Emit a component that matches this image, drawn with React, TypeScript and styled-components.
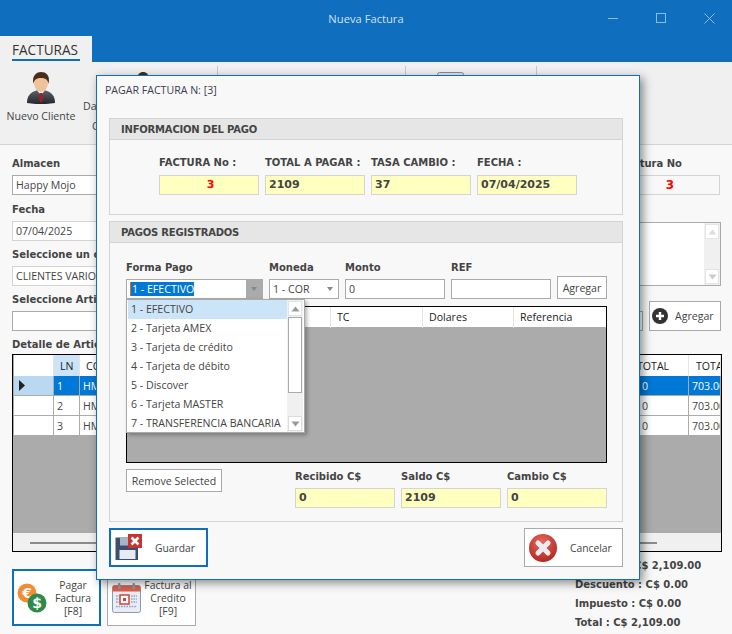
import React from 'react';
import styled, { createGlobalStyle } from 'styled-components';

const UI_FONT = `'Open Sans', 'Noto Sans', sans-serif`;
const BOLD_FONT = `'DejaVu Sans', Verdana, sans-serif`;

const GlobalStyle = createGlobalStyle`
  html, body { margin: 0; padding: 0; background: #f8f8f8; }
  body { width: 732px; height: 634px; overflow: hidden; font-family: ${UI_FONT}; font-size: 10.6px; color: #444; }
  * { box-sizing: border-box; }
`;

const Page = styled.div`
  position: relative;
  width: 732px;
  height: 634px;
  overflow: hidden;
`;

/* window chrome */
const TitleBar = styled.div`
  height: 36px;
  background: #106ebe;
  display: grid;
  grid-template-columns: 1fr auto 1fr;
  align-items: center;
`;
const WindowTitle = styled.div`
  grid-column: 2;
  color: #cfe2f3;
  font-size: 11.2px;
`;
const WindowControls = styled.div`
  grid-column: 3;
  justify-self: end;
  display: flex;
  color: #8fbbe0;
  margin-right: -1px;
`;
const WindowControl = styled.div`
  width: 48px;
  height: 36px;
  display: flex;
  align-items: center;
  justify-content: center;
`;
const TabStrip = styled.div`
  height: 26px;
  background: #106ebe;
`;
const Tab = styled.div`
  width: 92px;
  height: 26px;
  background: #f0f0f0;
  padding: 0 12px;
`;
const TabLabel = styled.div`
  height: 25px;
  line-height: 27px;
  font-size: 13.6px;
  color: #333;
  border-bottom: 2px solid #106ebe;
  white-space: nowrap;
`;

/* ribbon */
const Ribbon = styled.div`
  height: 83px;
  background: #f0f0f0;
  border-bottom: 1px solid #d4d4d4;
  display: flex;
  padding-top: 4px;
`;
const RibbonGroup = styled.div<{ $width: number; $last?: boolean }>`
  width: ${p => p.$width}px;
  height: 70px;
  display: flex;
  border-right: ${p => (p.$last ? 'none' : '1px solid #c8c8c8')};
`;
const RibbonButton = styled.div<{ $width: number }>`
  width: ${p => p.$width}px;
  flex: none;
  display: flex;
  flex-direction: column;
  align-items: center;
  padding-top: 6px;
  text-align: center;
  line-height: 20px;
  white-space: nowrap;
  svg { margin-bottom: 2px; }
`;

/* form behind the dialog */
const Content = styled.div`
  padding: 11px 11px 0 12px;
`;
const TopForm = styled.div`
  display: flex;
  justify-content: space-between;
`;
const FormColumn = styled.div<{ $width: number }>`
  width: ${p => p.$width}px;
  display: flex;
  flex-direction: column;
`;
const Label = styled.div`
  height: 14px;
  padding-top: 1px;
  font-family: ${BOLD_FONT};
  font-weight: 700;
  font-size: 10px;
  line-height: 14px;
  color: #444;
  white-space: nowrap;
`;
const RightLabel = styled(Label)`
  text-align: right;
  padding-right: 39px;
  margin-bottom: 5px;
`;
const DetailLabel = styled(Label)`
  margin-top: 6px;
`;
const Input = styled.div<{ $tone?: 'white' | 'gray' }>`
  width: 100%;
  height: 20px;
  line-height: 18px;
  background: #fff;
  border: 1px solid ${p => (p.$tone === 'gray' ? '#d4d4d4' : '#aaa')};
  padding: 0 3px;
  color: #444;
  white-space: nowrap;
  overflow: hidden;
  flex: none;
`;
const LeftField = styled.div<{ $gap?: number }>`
  margin-bottom: ${p => p.$gap ?? 6}px;
  display: flex;
  flex-direction: column;
  gap: 5px;
`;
const RedValue = styled.div`
  width: 100px;
  align-self: flex-end;
  margin-right: 1px;
  border: 1px solid #d4d4d4;
  background: #f8f8f8;
  height: 20px;
  line-height: 18px;
  text-align: center;
  font-family: ${BOLD_FONT};
  font-weight: 700;
  font-size: 12px;
  color: #f00;
`;
const NotesBox = styled.div`
  margin-top: 27px;
  height: 64px;
  background: #fff;
  border: 1px solid #aaa;
  display: flex;
  justify-content: flex-end;
`;
const ScrollTrack = styled.div<{ $width: number }>`
  width: ${p => p.$width}px;
  height: 100%;
  background: #f0f0f0;
  display: flex;
  flex-direction: column;
  justify-content: space-between;
  align-items: center;
  padding: 1px;
`;
const ScrollButton = styled.div`
  width: 100%;
  height: 15px;
  flex: none;
  background: #fff;
  border: 1px solid #e4e4e4;
  display: flex;
  align-items: center;
  justify-content: center;
`;
const ArticleRow = styled.div`
  display: flex;
  gap: 6px;
  align-items: flex-end;
`;
const ArticleField = styled(LeftField)`
  flex: 1;
  min-width: 0;
  margin-bottom: 0;
`;
const AddButton = styled.div`
  width: 72px;
  height: 30px;
  flex: none;
  border: 1px solid #aaa;
  background: #fff;
  display: flex;
  align-items: center;
  gap: 7px;
  padding-left: 2px;
`;

/* article grid */
const DetailGrid = styled.div`
  margin-top: 3px;
  width: 710px;
  height: 198px;
  border: 1px solid #000;
  background: #ababab;
  display: flex;
  flex-direction: column;
  overflow: hidden;
`;
const ArticleTable = styled.div`
  display: grid;
  grid-template-columns: 40px 26px 556px 53px 32px;
  grid-auto-rows: 20px;
  grid-template-rows: 21px;
  padding-left: 1px;
  flex: 1;
`;
const HeadCell = styled.div<{ $accent?: boolean; $pad?: number }>`
  background: ${p => (p.$accent ? '#cce4f7' : '#fff')};
  border-right: 1px solid #e4e4e4;
  color: #222;
  line-height: 22px;
  padding-left: ${p => p.$pad ?? 6}px;
  white-space: nowrap;
  overflow: hidden;
`;
const RowHead = styled.div<{ $current?: boolean }>`
  background: ${p => (p.$current ? '#b9d8f2' : '#fff')};
  border: 1px solid #ababab;
  border-width: 0 1px 1px 0;
  display: flex;
  align-items: center;
  padding-left: 5px;
`;
const Cell = styled.div<{ $selected?: boolean; $pad?: number }>`
  background: ${p => (p.$selected ? '#0078d7' : '#fff')};
  color: ${p => (p.$selected ? '#fff' : '#444')};
  border: 1px solid #ababab;
  border-width: 0 1px 1px 0;
  line-height: 20px;
  padding-left: ${p => p.$pad ?? 3}px;
  white-space: nowrap;
  overflow: hidden;
`;
const GridScroll = styled.div`
  height: 18px;
  background: #f0f0f0;
  padding: 9px 17px 0;
`;
const GridThumb = styled.div`
  height: 2px;
  width: 627px;
  background: #8c8c8c;
`;

/* footer */
const Footer = styled.div`
  display: flex;
  justify-content: space-between;
  margin-top: 4px;
`;
const FooterButtons = styled.div`
  display: flex;
  gap: 6px;
  margin-top: 13px;
`;
const ActionButton = styled.div<{ $primary?: boolean }>`
  width: 89px;
  height: 57px;
  background: #fff;
  border: ${p => (p.$primary ? '2px solid #106ebe' : '1px solid #aaa')};
  display: flex;
  align-items: center;
  padding-left: ${p => (p.$primary ? 3 : 4)}px;
  line-height: 13px;
`;
const ActionText = styled.div`
  flex: 1;
  padding-top: 2px;
  text-align: center;
  font-size: 10.4px;
  white-space: nowrap;
`;
const Totals = styled.div`
  width: 146px;
  display: flex;
  flex-direction: column;
  font-family: ${BOLD_FONT};
  font-weight: 700;
  font-size: 10px;
  line-height: 19px;
  color: #444;
  white-space: nowrap;
`;

/* dialog */
const Dialog = styled.div`
  position: absolute;
  left: 96px;
  top: 75px;
  width: 544px;
  height: 505px;
  background: #f8f8f8;
  border: 1px solid #106ebe;
  box-shadow: 3px 3px 9px rgba(0, 0, 0, 0.45);
  padding: 0 16px 0 12px;
`;
const DialogTitle = styled.div`
  height: 42px;
  padding-top: 6px;
  margin-left: -4px;
  line-height: 16px;
  color: #3c3c50;
`;
const Panel = styled.div<{ $height: number }>`
  height: ${p => p.$height}px;
  border: 1px solid #d4d4d4;
  margin-bottom: 6px;
`;
const PanelHeader = styled.div`
  height: 21px;
  background: #e6e6e6;
  border-bottom: 1px solid #d4d4d4;
  padding-left: 11px;
  line-height: 22px;
  font-family: ${BOLD_FONT};
  font-weight: 700;
  font-size: 10px;
  letter-spacing: -0.2px;
  color: #444;
  white-space: nowrap;
`;
const InfoRow = styled.div`
  display: flex;
  gap: 6px;
  padding: 15px 0 0 49px;
`;
const InfoField = styled.div`
  width: 100px;
  display: flex;
  flex-direction: column;
  gap: 6px;
`;
const YellowValue = styled.div<{ $center?: boolean; $red?: boolean }>`
  height: 20px;
  background: #ffffc0;
  border: 1px solid #d4d4d4;
  line-height: 18px;
  padding-left: 3px;
  text-align: ${p => (p.$center ? 'center' : 'left')};
  font-family: ${BOLD_FONT};
  font-weight: 700;
  font-size: 11px;
  color: ${p => (p.$red ? '#f00' : '#444')};
`;
const PaymentBody = styled.div`
  position: relative;
  padding: 17px 15px 0 16px;
`;
const EntryRow = styled.div`
  display: flex;
  gap: 6px;
  align-items: flex-end;
`;
const EntryField = styled.div<{ $width: number }>`
  width: ${p => p.$width}px;
  display: flex;
  flex-direction: column;
  gap: 5px;
`;
const ComboBox = styled.div`
  height: 20px;
  background: #fff;
  border: 1px solid #aaa;
  display: flex;
  align-items: stretch;
  justify-content: space-between;
  padding-left: 3px;
  line-height: 18px;
  color: #444;
  white-space: nowrap;
`;
const ComboSelection = styled.span`
  align-self: center;
  height: 14px;
  line-height: 14px;
  background: #0078d7;
  color: #fff;
  padding-left: 1px;
  border-left: 1px solid #e8650a;
`;
const ComboArrow = styled.div<{ $open?: boolean }>`
  width: 16px;
  background: ${p => (p.$open ? '#ababab' : '#fff')};
  display: flex;
  align-items: center;
  justify-content: center;
  &::after {
    content: '';
    border: 3.5px solid transparent;
    border-top: 4px solid #888;
    border-bottom: 0;
  }
`;
const SmallButton = styled.div<{ $width: number }>`
  width: ${p => p.$width}px;
  height: 23px;
  flex: none;
  background: #fff;
  border: 1px solid #aaa;
  display: flex;
  align-items: center;
  justify-content: center;
  color: #444;
  white-space: nowrap;
`;
const PaymentsTable = styled.div`
  margin-top: 7px;
  width: 481px;
  height: 157px;
  background: #ababab;
  border: 1px solid #000;
`;
const PaymentsHeader = styled.div`
  height: 20px;
  background: #fff;
  display: grid;
  grid-template-columns: 203px 92px 91px 1fr;
  line-height: 21px;
  color: #222;
`;
const PaymentsHead = styled.div`
  padding-left: 6px;
  border-left: 1px solid #e4e4e4;
  &:first-child { border-left: none; }
`;
const DropList = styled.div`
  position: absolute;
  left: 16px;
  top: 56px;
  width: 179px;
  height: 134px;
  background: #fff;
  border: 1px solid #aaa;
  box-shadow: 2px 2px 4px rgba(0, 0, 0, 0.3);
  display: flex;
  padding: 0 1px;
  z-index: 2;
`;
const DropItems = styled.div`
  flex: 1;
  display: flex;
  flex-direction: column;
  overflow: hidden;
`;
const DropItem = styled.div<{ $active?: boolean }>`
  height: 19px;
  flex: none;
  line-height: 19px;
  padding-left: 3px;
  background: ${p => (p.$active ? '#cce4f7' : 'transparent')};
  color: #444;
  white-space: nowrap;
`;
const DropScroll = styled.div`
  width: 16px;
  background: #f0f0f0;
  display: flex;
  flex-direction: column;
  padding: 1px;
`;
const DropThumb = styled.div`
  height: 76px;
  margin-top: 1px;
  background: #fff;
  border: 1px solid #aaa;
`;
const DropDown = styled(ScrollButton)`
  margin-top: auto;
  border-color: #ddd;
`;
const SummaryRow = styled.div`
  display: flex;
  margin-top: 6px;
`;
const SummaryFields = styled.div`
  margin-left: 73px;
  display: flex;
  gap: 6px;
`;
const SummaryField = styled.div`
  width: 100px;
  display: flex;
  flex-direction: column;
  gap: 5px;
`;
const DialogActions = styled.div`
  display: flex;
  justify-content: space-between;
`;
const DialogButton = styled.div<{ $primary?: boolean }>`
  width: 99px;
  height: 39px;
  background: #fff;
  border: ${p => (p.$primary ? '2px solid #106ebe' : '1px solid #aaa')};
  display: flex;
  align-items: center;
  gap: ${p => (p.$primary ? 12 : 13)}px;
  padding-left: 4px;
  color: #444;
  font-size: 10.3px;
`;

const Triangle = ({ dir, color = '#aaa' }: { dir: 'up' | 'down' | 'right'; color?: string }) => {
  if (dir === 'right') {
    return (
      <svg width="6" height="11" viewBox="0 0 6 11">
        <path d="M0 0 L6 5.5 L0 11 Z" fill={color} />
      </svg>
    );
  }
  return (
    <svg width="9" height="6" viewBox="0 0 9 6">
      <path d={dir === 'up' ? 'M0.5 5.5 L4.5 0.5 L8.5 5.5 Z' : 'M0.5 0.5 L4.5 5.5 L8.5 0.5 Z'} fill={color} />
    </svg>
  );
};

const PersonIcon = () => (
  <svg width="28" height="32" viewBox="0 0 28 32">
    <defs>
      <linearGradient id="suit" x1="0" y1="0" x2="0" y2="1">
        <stop offset="0" stopColor="#5a6068" />
        <stop offset="1" stopColor="#23272c" />
      </linearGradient>
    </defs>
    <path d="M0 31 C0 24 3 20.5 9.5 18.5 L18.5 18.5 C25 20.5 28 24 28 31 C20 32.5 8 32.5 0 31 Z" fill="url(#suit)" />
    <path d="M10 18.5 L14 23 L18 18.5 Z" fill="#f2f2f2" />
    <path d="M12.7 21 L15.3 21 L16 28 L14 30.5 L12 28 Z" fill="#a51d24" />
    <ellipse cx="14" cy="11" rx="7" ry="9" fill="#eec39c" />
    <path d="M6.5 12 C4.5 3 10 0 14 0 C19 0 23.5 3 21.5 12 C21 7.5 18 6 14 6 C10 6 7 7.5 6.5 12 Z" fill="#4a2c1a" />
  </svg>
);

const BoardIcon = () => (
  <svg width="27" height="32" viewBox="0 0 27 32">
    <rect x="0.5" y="0.5" width="26" height="28" rx="2" fill="#dfe6f0" stroke="#7f8ea6" />
  </svg>
);

const PlusIcon = () => (
  <svg width="16" height="16" viewBox="0 0 16 16">
    <circle cx="8" cy="8" r="8" fill="#333" />
    <path d="M8 4 V12 M4 8 H12" stroke="#fff" strokeWidth="2.4" />
  </svg>
);

const CoinsIcon = () => (
  <svg width="30" height="30" viewBox="0 0 30 30" fontFamily="'DejaVu Sans', sans-serif" fontWeight="700" textAnchor="middle">
    <circle cx="10" cy="10" r="9.5" fill="#ef8c34" />
    <text x="10" y="15" fontSize="14" fill="#fff">€</text>
    <circle cx="20" cy="20" r="9.5" fill="#2f8a4a" />
    <text x="20" y="25" fontSize="14" fill="#fff">$</text>
  </svg>
);

const CalendarIcon = () => (
  <svg width="29" height="30" viewBox="0 0 29 30">
    <rect x="0.5" y="2.5" width="28" height="27" rx="2" fill="#e8edf5" stroke="#8d99ae" />
    <path d="M0.5 4.5 a2 2 0 0 1 2 -2 h24 a2 2 0 0 1 2 2 v4 h-28 Z" fill="#d9604c" />
    <rect x="6" y="0" width="2.5" height="6" rx="1" fill="#8d99ae" />
    <rect x="20.5" y="0" width="2.5" height="6" rx="1" fill="#8d99ae" />
    <rect x="8" y="12" width="9" height="9" fill="#fff" stroke="#c8453a" strokeWidth="1.5" />
    <rect x="11" y="15" width="3" height="3" fill="#c8453a" />
    <path d="M19 13 h6 M19 16 h6 M19 19 h6 M4 23.5 h21 M4 13 h3 M4 16 h3 M4 19 h3" stroke="#8ea2c4" strokeWidth="1.6" strokeDasharray="1.6 1" />
  </svg>
);

const FloppyIcon = () => (
  <svg width="28" height="27" viewBox="0 0 28 27">
    <path d="M0.5 3.5 H23 V26 H0.5 Z" fill="#3d4f6b" />
    <rect x="5" y="3.5" width="12" height="8" fill="#a9b5c6" />
    <rect x="4.5" y="16" width="16" height="9" fill="#e5ebf3" />
    <rect x="13" y="0" width="14" height="14" fill="#c8322f" />
    <path d="M16.5 3.5 L23.5 10.5 M23.5 3.5 L16.5 10.5" stroke="#fff" strokeWidth="2.6" />
  </svg>
);

const CancelIcon = () => (
  <svg width="28" height="28" viewBox="0 0 28 28">
    <defs>
      <radialGradient id="cancelRed" cx="0.45" cy="0.3" r="0.8">
        <stop offset="0" stopColor="#e8695c" />
        <stop offset="1" stopColor="#a9201a" />
      </radialGradient>
    </defs>
    <circle cx="14" cy="14" r="14" fill="url(#cancelRed)" />
    <path d="M9 9 L19 19 M19 9 L9 19" stroke="#e8edf3" strokeWidth="5" strokeLinecap="round" />
  </svg>
);

const articleRows = [
  { ln: '1', selected: true },
  { ln: '2', selected: false },
  { ln: '3', selected: false },
];

const paymentTypes = [
  '1 - EFECTIVO',
  '2 - Tarjeta AMEX',
  '3 - Tarjeta de crédito',
  '4 - Tarjeta de débito',
  '5 - Discover',
  '6 - Tarjeta MASTER',
  '7 - TRANSFERENCIA BANCARIA',
];

const App: React.FC = () => {
  return (
    <Page>
      <GlobalStyle />
      <TitleBar>
        <WindowTitle>Nueva Factura</WindowTitle>
        <WindowControls>
          <WindowControl>
            <svg width="10" height="10" viewBox="0 0 10 10"><path d="M0 5.5 H10" stroke="currentColor" /></svg>
          </WindowControl>
          <WindowControl>
            <svg width="10" height="10" viewBox="0 0 10 10"><rect x="0.5" y="0.5" width="9" height="9" fill="none" stroke="currentColor" /></svg>
          </WindowControl>
          <WindowControl>
            <svg width="11" height="11" viewBox="0 0 11 11"><path d="M0.5 0.5 L10.5 10.5 M10.5 0.5 L0.5 10.5" stroke="currentColor" /></svg>
          </WindowControl>
        </WindowControls>
      </TitleBar>
      <TabStrip>
        <Tab><TabLabel>FACTURAS</TabLabel></Tab>
      </TabStrip>
      <Ribbon>
        <RibbonGroup $width={218}>
          <RibbonButton $width={82}>
            <PersonIcon />
            Nuevo Cliente
          </RibbonButton>
          <RibbonButton $width={122}>
            <PersonIcon />
            Datos Complementarios
            <br />
            Cliente Seleccionado
          </RibbonButton>
        </RibbonGroup>
        <RibbonGroup $width={188} />
        <RibbonGroup $width={131}>
          <RibbonButton $width={89}>
            <BoardIcon />
          </RibbonButton>
        </RibbonGroup>
      </Ribbon>

      <Content>
        <TopForm>
          <FormColumn $width={300}>
            <LeftField $gap={7}>
              <Label>Almacen</Label>
              <Input>Happy Mojo</Input>
            </LeftField>
            <LeftField>
              <Label>Fecha</Label>
              <Input $tone="gray">07/04/2025</Input>
            </LeftField>
            <LeftField>
              <Label>Seleccione un cliente</Label>
              <Input $tone="gray">CLIENTES VARIOS</Input>
            </LeftField>
          </FormColumn>
          <FormColumn $width={101}>
            <RightLabel>Factura No</RightLabel>
            <RedValue>3</RedValue>
            <NotesBox>
              <ScrollTrack $width={16}>
                <ScrollButton><Triangle dir="up" color="#ddd" /></ScrollButton>
                <ScrollButton><Triangle dir="down" color="#ccc" /></ScrollButton>
              </ScrollTrack>
            </NotesBox>
          </FormColumn>
        </TopForm>
        <ArticleRow>
          <ArticleField>
            <Label>Seleccione Articulo</Label>
            <Input />
          </ArticleField>
          <AddButton><PlusIcon />Agregar</AddButton>
        </ArticleRow>
        <DetailLabel>Detalle de Articulos</DetailLabel>
        <DetailGrid>
          <ArticleTable>
            <HeadCell />
            <HeadCell $accent>LN</HeadCell>
            <HeadCell>CODIGO</HeadCell>
            <HeadCell $pad={1}>TOTAL</HeadCell>
            <HeadCell $pad={7}>TOTAL</HeadCell>
            {articleRows.map(row => (
              <React.Fragment key={row.ln}>
                <RowHead $current={row.selected}>
                  {row.selected && <Triangle dir="right" color="#222" />}
                </RowHead>
                <Cell $selected={row.selected}>{row.ln}</Cell>
                <Cell $selected={row.selected}>HM</Cell>
                <Cell $selected={row.selected} $pad={6}>0</Cell>
                <Cell $selected={row.selected}>703.00</Cell>
              </React.Fragment>
            ))}
          </ArticleTable>
          <GridScroll><GridThumb /></GridScroll>
        </DetailGrid>
        <Footer>
          <FooterButtons>
            <ActionButton $primary>
              <CoinsIcon />
              <ActionText>Pagar<br />Factura<br />[F8]</ActionText>
            </ActionButton>
            <ActionButton>
              <CalendarIcon />
              <ActionText>Factura al<br />Credito<br />[F9]</ActionText>
            </ActionButton>
          </FooterButtons>
          <Totals>
            <span>Subtotal : C$ 2,109.00</span>
            <span>Descuento : C$ 0.00</span>
            <span>Impuesto : C$ 0.00</span>
            <span>Total : C$ 2,109.00</span>
          </Totals>
        </Footer>
      </Content>

      <Dialog>
        <DialogTitle>PAGAR FACTURA N: [3]</DialogTitle>
        <Panel $height={97}>
          <PanelHeader>INFORMACION DEL PAGO</PanelHeader>
          <InfoRow>
            <InfoField>
              <Label>FACTURA No :</Label>
              <YellowValue $center $red>3</YellowValue>
            </InfoField>
            <InfoField>
              <Label>TOTAL A PAGAR :</Label>
              <YellowValue>2109</YellowValue>
            </InfoField>
            <InfoField>
              <Label>TASA CAMBIO :</Label>
              <YellowValue>37</YellowValue>
            </InfoField>
            <InfoField>
              <Label>FECHA :</Label>
              <YellowValue>07/04/2025</YellowValue>
            </InfoField>
          </InfoRow>
        </Panel>
        <Panel $height={301}>
          <PanelHeader>PAGOS REGISTRADOS</PanelHeader>
          <PaymentBody>
            <EntryRow>
              <EntryField $width={137}>
                <Label>Forma Pago</Label>
                <ComboBox>
                  <ComboSelection>1 - EFECTIVO</ComboSelection>
                  <ComboArrow $open />
                </ComboBox>
              </EntryField>
              <EntryField $width={70}>
                <Label>Moneda</Label>
                <ComboBox>
                  1 - COR
                  <ComboArrow />
                </ComboBox>
              </EntryField>
              <EntryField $width={100}>
                <Label>Monto</Label>
                <Input>0</Input>
              </EntryField>
              <EntryField $width={100}>
                <Label>REF</Label>
                <Input />
              </EntryField>
              <SmallButton $width={50}>Agregar</SmallButton>
            </EntryRow>
            <DropList>
              <DropItems>
                {paymentTypes.map((type, i) => (
                  <DropItem key={type} $active={i === 0}>{type}</DropItem>
                ))}
              </DropItems>
              <DropScroll>
                <ScrollButton><Triangle dir="up" color="#999" /></ScrollButton>
                <DropThumb />
                <DropDown><Triangle dir="down" color="#999" /></DropDown>
              </DropScroll>
            </DropList>
            <PaymentsTable>
              <PaymentsHeader>
                <PaymentsHead>Forma Pago</PaymentsHead>
                <PaymentsHead>TC</PaymentsHead>
                <PaymentsHead>Dolares</PaymentsHead>
                <PaymentsHead>Referencia</PaymentsHead>
              </PaymentsHeader>
            </PaymentsTable>
            <SummaryRow>
              <SmallButton $width={96}>Remove Selected</SmallButton>
              <SummaryFields>
                <SummaryField>
                  <Label>Recibido C$</Label>
                  <YellowValue>0</YellowValue>
                </SummaryField>
                <SummaryField>
                  <Label>Saldo C$</Label>
                  <YellowValue>2109</YellowValue>
                </SummaryField>
                <SummaryField>
                  <Label>Cambio C$</Label>
                  <YellowValue>0</YellowValue>
                </SummaryField>
              </SummaryFields>
            </SummaryRow>
          </PaymentBody>
        </Panel>
        <DialogActions>
          <DialogButton $primary>
            <FloppyIcon />
            <span>Guardar</span>
          </DialogButton>
          <DialogButton>
            <CancelIcon />
            <span>Cancelar</span>
          </DialogButton>
        </DialogActions>
      </Dialog>
    </Page>
  );
};

export default App;
